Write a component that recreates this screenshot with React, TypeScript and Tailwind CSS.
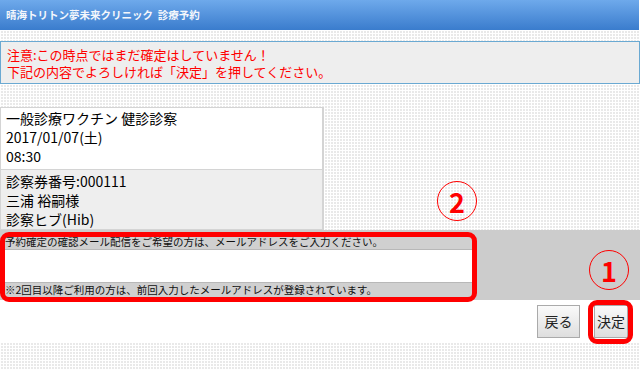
import React from "react";

const dots =
  "bg-white [background-image:linear-gradient(90deg,#fff_1px,transparent_1px),linear-gradient(#fff_1px,#e9e9e9_1px)] [background-size:3px_3px]";

function Marker({ n }: { n: string }) {
  return (
    <div className="flex h-[40px] w-[40px] items-center justify-center rounded-full border-[1.5px] border-[#ff0000] text-[27px] font-bold leading-none text-[#ff0000]">
      {n}
    </div>
  );
}

export default function App() {
  return (
    <div
      className={`relative h-[369px] w-[640px] overflow-hidden ${dots}`}
      style={{ fontFamily: '"Noto Sans CJK JP", "Noto Sans", sans-serif' }}
    >
      {/* header */}
      <div className="flex h-[30px] w-[639px] items-center bg-gradient-to-b from-[#6ea9eb] to-[#3a7ccd] px-[6px] text-[10.5px] font-bold text-[#f4f7fc]">
        晴海トリトン夢未来クリニック&nbsp;&nbsp;診療予約
      </div>

      <div className="h-[11px]" />

      {/* notice */}
      <div className="flex h-[43px] flex-col justify-center border border-[#6aa9d2] bg-[#eeeeee] px-[6px] text-[13px] leading-[17px] text-[#ff0000]">
        <p>注意:この時点ではまだ確定はしていません！</p>
        <p>下記の内容でよろしければ「決定」を押してください。</p>
      </div>

      <div className="h-[23px]" />

      {/* reservation info */}
      <div className="w-[324px] border border-r-2 border-[#d4d4d4] text-[14px] leading-[19px] text-black">
        <div className="h-[61px] bg-white px-[5px] pt-[1px]">
          <p>一般診療ワクチン 健診診察</p>
          <p>2017/01/07(土)</p>
          <p>08:30</p>
        </div>
        <div className="h-[60px] border-t border-[#d4d4d4] bg-[#eeeeee] px-[5px] pt-[2px]">
          <p>診察券番号:000111</p>
          <p>三浦 裕嗣様</p>
          <p>診察ヒブ(Hib)</p>
        </div>
      </div>

      {/* email band */}
      <div className="h-[70px] bg-[#cccccc] pt-[6px]">
        <div className="ml-[3px] w-[470px] text-[10.5px] leading-none text-[#111]">
          <div className="flex h-[14px] items-center border-b border-[#b8b8b8] bg-[#d0d0d0] pl-[2px]">
            予約確定の確認メール配信をご希望の方は、メールアドレスをご入力ください。
          </div>
          <div className="h-[33px] border-b border-[#b8b8b8] bg-white" />
          <div className="flex h-[14px] items-center bg-[#d0d0d0] pl-[2px]">
            ※2回目以降ご利用の方は、前回入力したメールアドレスが登録されています。
          </div>
        </div>
      </div>

      {/* buttons */}
      <div className="flex h-[43px] items-center justify-end gap-[14px] bg-white pr-[12px]">
        <button className="h-[33px] w-[43px] border border-[#aaaaaa] bg-gradient-to-b from-[#fafafa] to-[#dedede] text-[14px] text-[#222]">
          戻る
        </button>
        <button className="h-[33px] w-[34px] border border-[#aaaaaa] bg-gradient-to-b from-[#fafafa] to-[#dedede] text-[14px] text-[#222]">
          決定
        </button>
      </div>

      {/* annotations */}
      <div className="absolute left-0 top-[232px] h-[70px] w-[477px] rounded-[9px] border-[5px] border-[#ff0000]" />
      <div className="absolute left-[588px] top-[300px] h-[44px] w-[45px] rounded-[9px] border-[5px] border-[#ff0000]" />
      <div className="absolute left-[437px] top-[181px]">
        <Marker n="2" />
      </div>
      <div className="absolute left-[589px] top-[250px]">
        <Marker n="1" />
      </div>
    </div>
  );
}
